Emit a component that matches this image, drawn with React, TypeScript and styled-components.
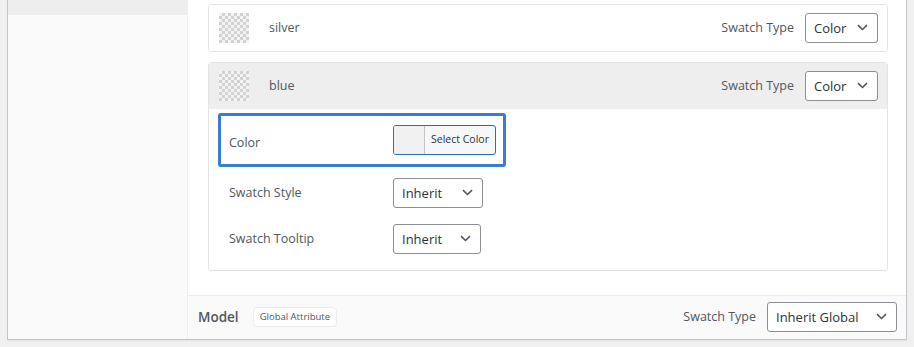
import React from "react";
import styled, { createGlobalStyle } from "styled-components";

const GlobalStyle = createGlobalStyle`
  html, body { margin: 0; padding: 0; }
  body {
    background: #f0f0f1;
    font-family: "Open Sans", "Noto Sans", Arial, sans-serif;
    color: #50575e;
  }
  * { box-sizing: border-box; }
`;

const Page = styled.div`
  padding-left: 7px;
  height: 347px;
`;

const Panel = styled.div`
  width: 900px;
  height: 340px;
  display: flex;
  background: #fff;
  border: 1px solid #c3c4c7;
  border-top: none;
  box-shadow: 0 1px 1px rgba(0, 0, 0, 0.04);
`;

const Sidebar = styled.div`
  width: 180px;
  flex: none;
  background: #fafafa;
  border-right: 1px solid #eeeeee;
`;

const SidebarTab = styled.div`
  height: 15px;
  background: #eeeeee;
`;

const Main = styled.div`
  flex: 1;
  display: flex;
  flex-direction: column;
`;

const Content = styled.div`
  flex: 1;
  padding: 4px 18px 0 20px;
  display: flex;
  flex-direction: column;
  gap: 10px;
`;

const Card = styled.div`
  border: 1px solid #e2e4e7;
  border-radius: 3px;
  background: #fff;
  overflow: hidden;
`;

const CardHeader = styled.div<{ $open?: boolean }>`
  height: 46px;
  display: flex;
  align-items: center;
  padding: 0 9px 0 10px;
  background: ${(p) => (p.$open ? "#eeeeee" : "#ffffff")};
`;

const Checker = styled.div`
  width: 30px;
  height: 30px;
  flex: none;
  background-color: #f3f3f3;
  background-image: linear-gradient(45deg, #d2d2d2 25%, transparent 25%, transparent 75%, #d2d2d2 75%),
    linear-gradient(45deg, #d2d2d2 25%, transparent 25%, transparent 75%, #d2d2d2 75%);
  background-size: 6px 6px;
  background-position: 0 0, 3px 3px;
`;

const TermName = styled.span`
  margin-left: 20px;
  font-size: 12.5px;
  color: #50575e;
  flex: 1;
  padding-bottom: 1px;
`;

const FieldLabel = styled.span`
  font-size: 12.5px;
  color: #50575e;
  margin-right: 11px;
  padding-bottom: 1px;
`;

const SelectBox = styled.div<{ $w: number }>`
  width: ${(p) => p.$w}px;
  height: 30px;
  border: 1px solid #8c8f94;
  border-radius: 3px;
  background: #fff;
  display: flex;
  align-items: center;
  justify-content: space-between;
  padding: 0 9px 1px 8px;
  font-size: 13px;
  color: #2c3338;
  flex: none;
`;

const CardBody = styled.div`
  padding: 4px 10px 8px 9px;
  display: flex;
  flex-direction: column;
  align-items: flex-start;
`;

const Row = styled.div<{ $highlight?: boolean }>`
  display: flex;
  align-items: center;
  ${(p) =>
    p.$highlight
      ? `
    border: 3px solid #3b7bd4;
    border-radius: 3px;
    padding: 9px 7px 9px 8px;
    margin-bottom: 3px;
  `
      : `
    padding: 8px 0 8px 11px;
  `}
`;

const RowLabel = styled.span<{ $drop?: number }>`
  width: 164px;
  flex: none;
  font-size: 12.5px;
  color: #50575e;
  padding-top: ${(p) => p.$drop ?? 0}px;
  padding-bottom: 1px;
`;

const ColorButton = styled.div`
  width: 103px;
  height: 30px;
  border: 1px solid #2271b1;
  border-radius: 3px;
  display: flex;
  overflow: hidden;
  background: #f6f7f7;
`;

const ColorSwatch = styled.span`
  width: 31px;
  flex: none;
  background: #f0f0f1;
  border-right: 1px solid #c3c4c7;
`;

const ColorText = styled.span`
  flex: 1;
  display: flex;
  align-items: center;
  justify-content: center;
  font-size: 10.5px;
  color: #2c3338;
  padding-bottom: 2px;
`;

const Footer = styled.div`
  height: 44px;
  flex: none;
  border-top: 1px solid #eeeeee;
  background: #fafafa;
  display: flex;
  align-items: center;
  padding: 0 9px 1px 10px;
`;

const FooterTitle = styled.span`
  font-size: 13.5px;
  font-weight: 600;
  color: #50575e;
  padding-bottom: 1px;
`;

const Badge = styled.span`
  margin-left: 14px;
  height: 20px;
  padding: 0 6px 1px;
  display: inline-flex;
  align-items: center;
  background: #fff;
  border: 1px solid #ececec;
  border-radius: 4px;
  font-size: 9.5px;
  color: #50575e;
`;

const Spacer = styled.div`
  flex: 1;
`;

const Chevron = () => (
  <svg width="11" height="7" viewBox="0 0 11 7" fill="none">
    <path d="M1 1.2 L5.5 5.5 L10 1.2" stroke="#50575e" strokeWidth="1.6" />
  </svg>
);

const Select = ({ value, width }: { value: string; width: number }) => (
  <SelectBox $w={width}>
    <span>{value}</span>
    <Chevron />
  </SelectBox>
);

export default function App() {
  return (
    <>
      <GlobalStyle />
      <Page>
        <Panel>
          <Sidebar>
            <SidebarTab />
          </Sidebar>
          <Main>
            <Content>
              <Card>
                <CardHeader>
                  <Checker />
                  <TermName>silver</TermName>
                  <FieldLabel>Swatch Type</FieldLabel>
                  <Select value="Color" width={73} />
                </CardHeader>
              </Card>
              <Card>
                <CardHeader $open>
                  <Checker />
                  <TermName>blue</TermName>
                  <FieldLabel>Swatch Type</FieldLabel>
                  <Select value="Color" width={73} />
                </CardHeader>
                <CardBody>
                  <Row $highlight>
                    <RowLabel $drop={6}>Color</RowLabel>
                    <ColorButton>
                      <ColorSwatch />
                      <ColorText>Select Color</ColorText>
                    </ColorButton>
                  </Row>
                  <Row>
                    <RowLabel>Swatch Style</RowLabel>
                    <Select value="Inherit" width={90} />
                  </Row>
                  <Row>
                    <RowLabel>Swatch Tooltip</RowLabel>
                    <Select value="Inherit" width={88} />
                  </Row>
                </CardBody>
              </Card>
            </Content>
            <Footer>
              <FooterTitle>Model</FooterTitle>
              <Badge>Global Attribute</Badge>
              <Spacer />
              <FieldLabel>Swatch Type</FieldLabel>
              <Select value="Inherit Global" width={130} />
            </Footer>
          </Main>
        </Panel>
      </Page>
    </>
  );
}
